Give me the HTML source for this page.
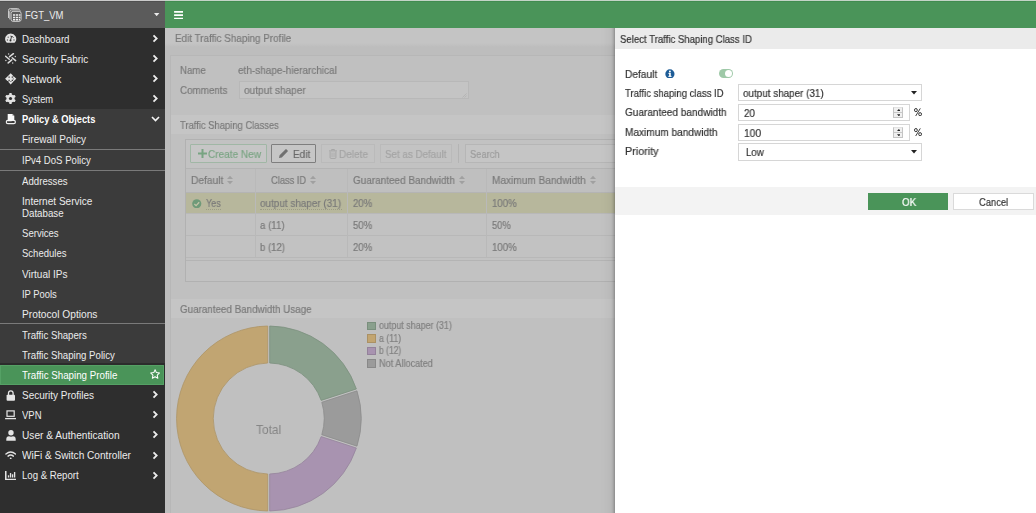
<!DOCTYPE html>
<html>
<head>
<meta charset="utf-8">
<title>FGT_VM</title>
<style>
*{box-sizing:border-box;margin:0;padding:0}
html,body{width:1036px;height:513px;overflow:hidden;background:#bfbfbf;font-family:"Liberation Sans",sans-serif;font-size:11px;color:#6e6e6e}
.abs{position:absolute}
.t{position:absolute;display:inline-block;white-space:nowrap;transform-origin:0 50%;transform:scaleX(.9);line-height:14px;height:14px}
/* top */
#topline{left:0;top:0;width:1036px;height:1px;background:linear-gradient(to right,#cbcbcb 0,#cbcbcb 165px,#c4d4c7 165px)}
#topline2{left:0;top:1px;width:1036px;height:1px;background:linear-gradient(to right,#505050 0,#505050 165px,#418c50 165px);z-index:1}
#hdrL{left:0;top:1px;width:165px;height:27px;background:#5b5b5b}
#hdrR{left:165px;top:1px;width:871px;height:27px;background:#4a9459}
/* sidebar */
#side{left:0;top:28px;width:165px;height:485px;background:#2e2e2e}
#sub{left:0;top:108.6px;width:165px;height:256.4px;background:#3b3b3b}
#sel{left:0;top:364.6px;width:164.2px;height:20.5px;background:#4a9459;box-shadow:inset 0 0 0 1px rgba(120,200,140,.25)}
.sep{position:absolute;left:0;width:165px;height:1px;background:#7a7a7a}
.s{color:#ececec}
.chev{position:absolute;left:151px;width:8px;height:10px}
/* main */
#main{left:165px;top:28px;width:450px;height:485px;background:#bdbdbd}
#mainhdr{left:165px;top:28px;width:450px;height:19px;background:linear-gradient(#c4c4c4 0,#c4c4c4 15px,#bdbdbd 19px)}
.m{color:#7a7a7a}
/* dialog */
#dlg{left:615px;top:28px;width:421px;height:485px;background:#fff}
#dlgclip{left:575px;top:28px;width:461px;height:485px;overflow:hidden}
#dlgclip>div{position:absolute;left:40px;top:-20px;width:440px;height:540px;background:#fff;box-shadow:0 0 4px rgba(0,0,0,.45),0 0 14px rgba(0,0,0,.13)}
#dlgtitle{left:615px;top:28px;width:421px;height:21px;background:#ebebeb}
#dlgfoot{left:615px;top:187px;width:421px;height:28px;background:#f3f3f3}
.d{color:#333}
.t:not(.s){will-change:transform}
.t:not(.s){-webkit-text-stroke:.2px currentColor}
.d{-webkit-text-stroke:.25px #333}
.fld{position:absolute;background:#fff;border:1px solid #d6d6d6}
</style>
</head>
<body>
<div class="abs" id="topline"></div>
<div class="abs" id="topline2"></div>
<div class="abs" id="hdrL"></div>
<div class="abs" id="hdrR"></div>

<!-- SIDEBAR -->
<div class="abs" id="side"></div>
<div class="abs" id="sub"></div>
<div class="abs" style="left:0;top:363.4px;width:165px;height:22.6px;background:#2c2c2c"></div>
<div class="abs" id="sel"></div>
<div class="sep" style="top:149px"></div>
<div class="sep" style="top:170px"></div>
<div class="sep" style="top:323px"></div>

<span class="t s" style="left:25.0px;top:8px;font-size:11px;transform:scaleX(0.862)">FGT_VM</span>

<span class="t s" style="left:21.9px;top:32px;transform:scaleX(0.883)">Dashboard</span>
<span class="t s" style="left:21.9px;top:52px;transform:scaleX(0.903)">Security Fabric</span>
<span class="t s" style="left:21.9px;top:72px;transform:scaleX(0.975)">Network</span>
<span class="t s" style="left:21.9px;top:92px;transform:scaleX(0.849)">System</span>
<span class="t s" style="left:21.9px;top:112px;font-weight:bold;color:#fff;transform:scaleX(0.845)">Policy &amp; Objects</span>
<span class="t s" style="left:21.9px;top:132px;transform:scaleX(0.911)">Firewall Policy</span>
<span class="t s" style="left:21.9px;top:153px;transform:scaleX(0.872)">IPv4 DoS Policy</span>
<span class="t s" style="left:21.9px;top:174px;transform:scaleX(0.877)">Addresses</span>
<span class="t s" style="left:21.9px;top:194px;transform:scaleX(0.914)">Internet Service</span>
<span class="t s" style="left:21.9px;top:206px;transform:scaleX(0.883)">Database</span>
<span class="t s" style="left:21.9px;top:226px;transform:scaleX(0.869)">Services</span>
<span class="t s" style="left:21.9px;top:246px;transform:scaleX(0.865)">Schedules</span>
<span class="t s" style="left:21.9px;top:267px;transform:scaleX(0.912)">Virtual IPs</span>
<span class="t s" style="left:21.9px;top:287px;transform:scaleX(0.854)">IP Pools</span>
<span class="t s" style="left:21.9px;top:307px;transform:scaleX(0.928)">Protocol Options</span>
<span class="t s" style="left:21.9px;top:328px;transform:scaleX(0.877)">Traffic Shapers</span>
<span class="t s" style="left:21.9px;top:348px;transform:scaleX(0.878)">Traffic Shaping Policy</span>
<span class="t s" style="left:21.9px;top:368px;color:#fff;transform:scaleX(0.886)">Traffic Shaping Profile</span>
<span class="t s" style="left:21.9px;top:388px;transform:scaleX(0.906)">Security Profiles</span>
<span class="t s" style="left:21.9px;top:408px;transform:scaleX(0.865)">VPN</span>
<span class="t s" style="left:21.9px;top:428px;transform:scaleX(0.923)">User &amp; Authentication</span>
<span class="t s" style="left:21.9px;top:448px;transform:scaleX(0.918)">WiFi &amp; Switch Controller</span>
<span class="t s" style="left:21.9px;top:468px;transform:scaleX(0.874)">Log &amp; Report</span>


<!-- header icons -->
<svg class="abs" style="left:8px;top:7.5px" width="14" height="14" viewBox="0 0 14 14" fill="none" stroke="#d6d6d6" stroke-width=".9">
<path d="M0.5 10V2.4Q0.5 0.6 2.3 0.6H9.6Q10.6 .6 11.4 1.6"/>
<path d="M1.8 11.4V3.7Q1.8 1.9 3.6 1.9H10.6Q11.8 1.9 12.6 3"/>
<rect x="3.1" y="3.4" width="10" height="10" rx="2"/>
<path d="M5 7.1h2.2M7.9 7.1h2.2M10.8 7.1h1.6M5 9.4h2.2M7.9 9.4h2.2M10.8 9.4h1.6M5 11.7h2.2M7.9 11.7h2.2M10.8 11.7h1.2" stroke="#efefef" stroke-width="1.5"/>
</svg>
<svg class="abs" style="left:154.2px;top:13px" width="5.4" height="3.3" viewBox="0 0 6 3.4"><path d="M0 0h6L3 3.4z" fill="#ececec"/></svg>
<svg class="abs" style="left:174px;top:10.7px" width="9.4" height="8.3" viewBox="0 0 10 9"><path d="M0 0h10v1.8H0zM0 3.6h10v1.8H0zM0 7.2h10V9H0z" fill="#fff"/></svg>

<!-- sidebar icons -->
<svg class="abs" style="left:5px;top:33px" width="12" height="11" viewBox="0 0 12 11"><path d="M5.7 0.4a5.5 5.5 0 0 0-4.7 8.4q.4.9 1.2.9h7q.8 0 1.2-.9A5.5 5.5 0 0 0 5.7.4z" fill="#e2e2e2"/><path d="M5.5 7.4L6.6 3.4M5.4 3.1L7.9 3.8" stroke="#2e2e2e" stroke-width=".9" fill="none"/><circle cx="5.5" cy="7.6" r="1" fill="#2e2e2e"/><circle cx="2.4" cy="7" r=".65" fill="#555"/><circle cx="3.2" cy="4.2" r=".65" fill="#555"/><circle cx="9" cy="7" r=".65" fill="#555"/><circle cx="8.4" cy="4.6" r=".5" fill="#666"/></svg>
<svg class="abs" style="left:5px;top:53px" width="12" height="11" viewBox="0 0 12 11" stroke="#dcdcdc" stroke-width="1.5" stroke-linecap="round" fill="#cfcfcf"><path d="M4.6 3.7L8.4 0.7M0.6 3.2L4.2 6.3M7.2 4.7L10.6 7.6M3.2 9.9L6.8 6.9"/><circle cx="3.6" cy="0.9" r=".75" stroke="none"/><circle cx="10.3" cy="3.4" r=".75" stroke="none"/><circle cx="0.9" cy="7.5" r=".75" stroke="none"/><circle cx="7.7" cy="10" r=".75" stroke="none"/></svg>
<svg class="abs" style="left:5px;top:72.5px" width="12" height="12" viewBox="0 0 12 12" fill="#e4e4e4"><path d="M5.7 0.2L8.9 3.6H2.5zM5.7 11.4L8.9 8H2.5zM0.1 5.8L3.5 2.6V9zM11.3 5.8L7.9 2.6V9zM4.7 3H6.7V8.6H4.7zM3 4.8H8.4V6.8H3z"/></svg>
<svg class="abs" style="left:5.2px;top:93px" width="11" height="11" viewBox="0 0 11 11"><g fill="#e2e2e2"><circle cx="5.5" cy="5.5" r="4"/><rect x="4.2" y="0.1" width="2.6" height="10.8" rx=".7"/><rect x="4.2" y="0.1" width="2.6" height="10.8" rx=".7" transform="rotate(60 5.5 5.5)"/><rect x="4.2" y="0.1" width="2.6" height="10.8" rx=".7" transform="rotate(120 5.5 5.5)"/></g><circle cx="5.5" cy="5.5" r="1.6" fill="#2e2e2e"/></svg>
<svg class="abs" style="left:5px;top:113px" width="12" height="12" viewBox="0 0 12 12"><rect x="1.3" y="7.3" width="9.1" height="3.3" rx="1.6" fill="#3b3b3b" stroke="#f0f0f0" stroke-width="1.2"/><path d="M2.7 0.9H7.5L9.3 2.8V7.4H7.2L6.6 8.3H2.7z" fill="#fafafa"/><path d="M7.5 0.9V2.8H9.3z" fill="#8a8a8a"/></svg>
<svg class="abs" style="left:6px;top:389.6px" width="9.6" height="11" viewBox="0 0 9 11"><path d="M2.2 5V3.1a2.3 2.3 0 0 1 4.6 0V5" fill="none" stroke="#e6e6e6" stroke-width="1.3"/><rect x="0.3" y="4.7" width="8.4" height="6" rx=".9" fill="#e6e6e6"/></svg>
<svg class="abs" style="left:5px;top:410.2px" width="11.2" height="10" viewBox="0 0 11 10" fill="none" stroke="#e6e6e6"><rect x="1.9" y=".9" width="7.2" height="5.4" stroke-width="1.2"/><path d="M0 8.6H11" stroke-width="1.3"/></svg>
<svg class="abs" style="left:5.8px;top:429.8px" width="10" height="11" viewBox="0 0 10 11" fill="#e4e4e4"><circle cx="5" cy="2.8" r="2.7"/><path d="M0.3 10.8V9.2Q.3 6.4 3 6.3Q5 7.2 7 6.3Q9.7 6.4 9.7 9.2V10.8z"/></svg>
<svg class="abs" style="left:5px;top:450.8px" width="11.4" height="8.6" viewBox="0 0 12 9" fill="none" stroke="#e4e4e4" stroke-width="1.5" stroke-linecap="round"><path d="M1 3.2Q6 -1.2 11 3.2"/><path d="M3.2 5.4Q6 3 8.8 5.4"/><circle cx="6" cy="7.7" r=".95" fill="#e4e4e4" stroke="none"/></svg>
<svg class="abs" style="left:5px;top:470.8px" width="11.2" height="9.2" viewBox="0 0 11 9" fill="#e4e4e4"><path d="M0 0H1.5V7.5H11V9H0z"/><rect x="2.8" y="4.2" width="1.3" height="2.2"/><rect x="4.8" y="2" width="1.3" height="4.4"/><rect x="6.8" y="3.2" width="1.3" height="3.2"/><rect x="8.8" y="1" width="1.3" height="5.4"/></svg>

<!-- chevrons -->
<svg class="abs chv" style="left:152px;top:34px" width="6" height="9" viewBox="0 0 6 9" fill="none" stroke="#ececec" stroke-width="1.8"><path d="M1.5 1.3L4.7 4.5L1.5 7.7"/></svg>
<svg class="abs chv" style="left:152px;top:54px" width="6" height="9" viewBox="0 0 6 9" fill="none" stroke="#ececec" stroke-width="1.8"><path d="M1.5 1.3L4.7 4.5L1.5 7.7"/></svg>
<svg class="abs chv" style="left:152px;top:74px" width="6" height="9" viewBox="0 0 6 9" fill="none" stroke="#ececec" stroke-width="1.8"><path d="M1.5 1.3L4.7 4.5L1.5 7.7"/></svg>
<svg class="abs chv" style="left:152px;top:94px" width="6" height="9" viewBox="0 0 6 9" fill="none" stroke="#ececec" stroke-width="1.8"><path d="M1.5 1.3L4.7 4.5L1.5 7.7"/></svg>
<svg class="abs chv" style="left:151px;top:116px" width="9" height="6" viewBox="0 0 9 6" fill="none" stroke="#f4f4f4" stroke-width="1.6"><path d="M1 1L4.5 4.6L8 1"/></svg>
<svg class="abs chv" style="left:152px;top:390px" width="6" height="9" viewBox="0 0 6 9" fill="none" stroke="#ececec" stroke-width="1.8"><path d="M1.5 1.3L4.7 4.5L1.5 7.7"/></svg>
<svg class="abs chv" style="left:152px;top:410px" width="6" height="9" viewBox="0 0 6 9" fill="none" stroke="#ececec" stroke-width="1.8"><path d="M1.5 1.3L4.7 4.5L1.5 7.7"/></svg>
<svg class="abs chv" style="left:152px;top:430px" width="6" height="9" viewBox="0 0 6 9" fill="none" stroke="#ececec" stroke-width="1.8"><path d="M1.5 1.3L4.7 4.5L1.5 7.7"/></svg>
<svg class="abs chv" style="left:152px;top:451px" width="6" height="9" viewBox="0 0 6 9" fill="none" stroke="#ececec" stroke-width="1.8"><path d="M1.5 1.3L4.7 4.5L1.5 7.7"/></svg>
<svg class="abs chv" style="left:152px;top:471px" width="6" height="9" viewBox="0 0 6 9" fill="none" stroke="#ececec" stroke-width="1.8"><path d="M1.5 1.3L4.7 4.5L1.5 7.7"/></svg>
<!-- star -->
<svg class="abs" style="left:150.3px;top:369.3px" width="10.2" height="10.2" viewBox="0 0 11 11" fill="none" stroke="#fff" stroke-width="1.1" stroke-linejoin="round"><path d="M5.5 0.8L6.9 3.9L10.3 4.3L7.8 6.6L8.5 10L5.5 8.3L2.5 10L3.2 6.6L0.7 4.3L4.1 3.9z"/></svg>

<!-- MAIN -->
<div class="abs" id="main"></div>
<div class="abs" id="mainhdr"></div>
<span class="t m" style="left:174.8px;top:31px;transform:scaleX(0.898)">Edit Traffic Shaping Profile</span>


<!-- section 1 -->
<div class="abs" style="left:170px;top:55px;width:445px;height:458px;background:#c0c0c0;border:1px solid #b7b7b7;border-right:0;border-bottom:0"></div>
<span class="t m" style="left:180.2px;top:63px;transform:scaleX(0.879)">Name</span>
<span class="t m" style="left:238.4px;top:63px;transform:scaleX(0.908)">eth-shape-hierarchical</span>
<span class="t m" style="left:180.2px;top:83px;transform:scaleX(0.891)">Comments</span>
<div class="abs" style="left:239px;top:81px;width:230px;height:18px;background:#c4c4c4;border:1px solid #b8b8b8"></div>
<span class="t m" style="left:244.3px;top:83px;transform:scaleX(0.918)">output shaper</span>
<svg class="abs" style="left:462px;top:93px" width="5" height="5" viewBox="0 0 6 6" stroke="#b2b2b2" stroke-width="1"><path d="M0.5 5.5L5.5 .5M3 5.5L5.5 3"/></svg>

<!-- section 2 -->
<div class="abs" style="left:171px;top:115px;width:444px;height:18.5px;background:#c5c5c5"></div>
<span class="t m" style="left:180.2px;top:118px;transform:scaleX(0.855)">Traffic Shaping Classes</span>
<div class="abs" style="left:185px;top:139px;width:430px;height:143px;background:#c2c2c2;border:1px solid #b1b1b1;border-right:0"></div>
<!-- toolbar -->
<div class="abs" style="left:190px;top:144px;width:77px;height:19px;background:#c6c6c6;border:1px solid #a0b7a5;border-radius:1px"></div>
<svg class="abs" style="left:198px;top:149px" width="9" height="9" viewBox="0 0 9 9"><path d="M3.5 0h2v3.5H9v2H5.5V9h-2V5.5H0v-2h3.5z" fill="#78a482"/></svg>
<span class="t" style="left:208.1px;top:147px;color:#7ca585;transform:scaleX(0.912)">Create New</span>
<div class="abs" style="left:271px;top:144px;width:45px;height:19px;background:#c6c6c6;border:1px solid #7e7e7e;border-radius:1px"></div>
<svg class="abs" style="left:279px;top:149px" width="9" height="9" viewBox="0 0 9 9"><path d="M0 9L.6 6.2L6.4.4Q7 -.2 7.6.4L8.6 1.4Q9.2 2 8.6 2.6L2.8 8.4z" fill="#707070"/></svg>
<span class="t" style="left:292.8px;top:147px;color:#6a6a6a;transform:scaleX(0.911)">Edit</span>
<div class="abs" style="left:321.4px;top:144px;width:53.2px;height:19px;background:#c3c3c3;border:1px solid #bababa"></div>
<svg class="abs" style="left:329px;top:148.6px" width="8" height="10" viewBox="0 0 8 10" fill="none" stroke="#a6a6a6"><path d="M0 1.9H8M2.6 1.6V.5H5.4V1.6" stroke-width="1"/><path d="M1.1 2.6V8.6Q1.1 9.4 1.9 9.4H6.1Q6.9 9.4 6.9 8.6V2.6" stroke-width="1"/><path d="M3 3.6V8M5 3.6V8" stroke-width=".8"/></svg>
<span class="t" style="left:338.9px;top:147px;color:#a4a4a4;transform:scaleX(0.912)">Delete</span>
<div class="abs" style="left:379.8px;top:144px;width:72.4px;height:19px;background:#c3c3c3;border:1px solid #bababa"></div>
<span class="t" style="left:384.5px;top:147px;color:#a4a4a4;transform:scaleX(0.890)">Set as Default</span>
<div class="abs" style="left:458px;top:144px;width:1px;height:19px;background:#b4b4b4"></div>
<div class="abs" style="left:465px;top:144px;width:150px;height:19px;background:#c5c5c5;border:1px solid #b6b6b6;border-right:0"></div>
<span class="t" style="left:470.2px;top:147px;color:#9c9c9c;transform:scaleX(0.849)">Search</span>
<!-- table -->
<div class="abs" style="left:186px;top:168px;width:429px;height:1px;background:#b4b4b4"></div>
<div class="abs" style="left:186px;top:169px;width:429px;height:23px;background:#bfbfbf"></div>
<div class="abs" style="left:186px;top:192px;width:429px;height:1px;background:#b4b4b4"></div>
<div class="abs" style="left:186px;top:193px;width:429px;height:20px;background:#b7b79c"></div>
<div class="abs" style="left:186px;top:213px;width:429px;height:1px;background:#b8b8b8"></div>
<div class="abs" style="left:186px;top:235px;width:429px;height:1px;background:#b8b8b8"></div>
<div class="abs" style="left:186px;top:257px;width:429px;height:1px;background:#b8b8b8"></div>
<div class="abs" style="left:186px;top:260px;width:429px;height:1px;background:#b4b4b4"></div>
<div class="abs" style="left:255px;top:169px;width:1px;height:88px;background:#b9b9b9"></div>
<div class="abs" style="left:347px;top:169px;width:1px;height:88px;background:#b9b9b9"></div>
<div class="abs" style="left:486px;top:169px;width:1px;height:88px;background:#b9b9b9"></div>
<span class="t m" style="left:191.0px;top:173px;transform:scaleX(0.929)">Default</span>
<span class="t m" style="left:270.6px;top:173px;transform:scaleX(0.845)">Class ID</span>
<span class="t m" style="left:352.9px;top:173px;transform:scaleX(0.905)">Guaranteed Bandwidth</span>
<span class="t m" style="left:492.2px;top:173px;transform:scaleX(0.918)">Maximum Bandwidth</span>
<svg class="abs sort" style="left:227px;top:175px" width="6" height="10" viewBox="0 0 6 10" fill="#a0a0a0"><path d="M0 4.1L3 .8L6 4.1zM0 5.9L3 9.2L6 5.9z"/></svg>
<svg class="abs sort" style="left:310px;top:175px" width="6" height="10" viewBox="0 0 6 10" fill="#a0a0a0"><path d="M0 4.1L3 .8L6 4.1zM0 5.9L3 9.2L6 5.9z"/></svg>
<svg class="abs sort" style="left:459px;top:175px" width="6" height="10" viewBox="0 0 6 10" fill="#a0a0a0"><path d="M0 4.1L3 .8L6 4.1zM0 5.9L3 9.2L6 5.9z"/></svg>
<svg class="abs sort" style="left:590px;top:175px" width="6" height="10" viewBox="0 0 6 10" fill="#a0a0a0"><path d="M0 4.1L3 .8L6 4.1zM0 5.9L3 9.2L6 5.9z"/></svg>
<svg class="abs" style="left:192px;top:198.6px" width="9.5" height="9.5" viewBox="0 0 10 10"><circle cx="5" cy="5" r="4.8" fill="#6f9a79"/><path d="M2.5 5.2L4.3 7L7.6 3.4" fill="none" stroke="#c4c4a8" stroke-width="1.4"/></svg>
<span class="t m" style="left:205.5px;top:196px;transform:scaleX(0.822)">Yes</span>
<div class="abs" style="left:206px;top:209px;width:15px;height:0;border-top:1px dotted #9c9c86"></div>
<div class="abs" style="left:260px;top:209px;width:82px;height:0;border-top:1px dotted #9c9c86"></div>
<span class="t m" style="left:260.0px;top:196px;transform:scaleX(0.902)">output shaper (31)</span>
<span class="t m" style="left:352.9px;top:196px;transform:scaleX(0.873)">20%</span>
<span class="t m" style="left:492.2px;top:196px;transform:scaleX(0.879)">100%</span>
<span class="t m" style="left:260.0px;top:218px;transform:scaleX(0.879)">a (11)</span>
<span class="t m" style="left:352.9px;top:218px;transform:scaleX(0.873)">50%</span>
<span class="t m" style="left:492.2px;top:218px;transform:scaleX(0.850)">50%</span>
<span class="t m" style="left:260.0px;top:240px;transform:scaleX(0.869)">b (12)</span>
<span class="t m" style="left:352.9px;top:240px;transform:scaleX(0.873)">20%</span>
<span class="t m" style="left:492.2px;top:240px;transform:scaleX(0.879)">100%</span>

<!-- section 3 -->
<div class="abs" style="left:171px;top:299px;width:444px;height:18.5px;background:#c5c5c5"></div>
<span class="t m" style="left:179.8px;top:302px;transform:scaleX(0.893)">Guaranteed Bandwidth Usage</span>
<svg class="abs" style="left:170px;top:320px" width="200" height="193" viewBox="170 320 200 193">
<g stroke-width=".8">
<path fill="#8aa08d" stroke="#7b8f7e" d="M269.70 326.01A92.5 92.5 0 0 1 356.36 388.97L321.17 400.40A55.5 55.5 0 0 0 269.70 363.01z"/><path fill="#9b9b9b" stroke="#8b8b8b" d="M356.98 390.87A92.5 92.5 0 0 1 356.98 446.13L321.78 434.70A55.5 55.5 0 0 0 321.78 402.30z"/><path fill="#a893b0" stroke="#96849c" d="M356.36 448.03A92.5 92.5 0 0 1 269.70 510.99L269.70 473.99A55.5 55.5 0 0 0 321.17 436.60z"/><path fill="#c1a572" stroke="#ad9466" d="M267.70 510.99A92.5 92.5 0 0 1 267.70 326.01L267.70 363.01A55.5 55.5 0 0 0 267.70 473.99z"/>
</g>
</svg>
<div class="abs" style="left:367px;top:321.7px;width:8.8px;height:8.6px;background:#8aa08d;border:1px solid #7a8f7d"></div>
<div class="abs" style="left:367px;top:334.2px;width:8.8px;height:8.6px;background:#c2a571;border:1px solid #ab9164"></div>
<div class="abs" style="left:367px;top:346.6px;width:8.8px;height:8.6px;background:#a893b0;border:1px solid #94829b"></div>
<div class="abs" style="left:367px;top:359.1px;width:8.8px;height:8.6px;background:#9b9b9b;border:1px solid #898989"></div>
<span class="t m" style="left:378.5px;top:319px;font-size:10px;color:#808080;transform:scaleX(0.891)">output shaper (31)</span>
<span class="t m" style="left:378.5px;top:332px;font-size:10px;color:#808080;transform:scaleX(0.872)">a (11)</span>
<span class="t m" style="left:378.5px;top:344px;font-size:10px;color:#808080;transform:scaleX(0.850)">b (12)</span>
<span class="t m" style="left:378.5px;top:357px;font-size:10px;color:#808080;transform:scaleX(0.914)">Not Allocated</span>
<span class="t m" style="left:255.9px;top:423px;font-size:13px;transform:scaleX(0.919);color:#868686;-webkit-text-stroke:0">Total</span>

<!-- DIALOG -->
<div class="abs" id="dlgclip"><div></div></div>
<div class="abs" id="dlg"></div>
<div class="abs" id="dlgtitle"></div>
<div class="abs" id="dlgfoot"></div>
<span class="t d" style="left:620.0px;top:32px;transform:scaleX(0.871)">Select Traffic Shaping Class ID</span>


<span class="t d" style="left:625.2px;top:67px;transform:scaleX(0.926)">Default</span>
<svg class="abs" style="left:665.4px;top:68.7px" width="9.8" height="9.8" viewBox="0 0 10 10"><circle cx="5" cy="5" r="4.7" fill="#1d5c97"/><rect x="4.2" y="4" width="1.7" height="3.7" fill="#fff"/><rect x="3.5" y="4" width="1.6" height="1" fill="#fff"/><rect x="3.4" y="7" width="3.3" height="1" fill="#fff"/><circle cx="5" cy="2.5" r="1" fill="#fff"/></svg>
<div class="abs" style="left:719px;top:69px;width:14px;height:9px;border-radius:5px;background:#9fc9a8"></div>
<div class="abs" style="left:725px;top:70px;width:7px;height:7px;border-radius:4px;background:#fff"></div>

<span class="t d" style="left:625.2px;top:86px;transform:scaleX(0.867)">Traffic shaping class ID</span>
<div class="fld" style="left:738px;top:84px;width:184px;height:17px"></div>
<span class="t d" style="left:743.1px;top:86px;transform:scaleX(0.898)">output shaper (31)</span>
<svg class="abs" style="left:910.8px;top:91.2px" width="6" height="3.4" viewBox="0 0 6 3.4"><path d="M0 0h6L3 3.4z" fill="#222"/></svg>

<span class="t d" style="left:625.2px;top:105px;transform:scaleX(0.912)">Guaranteed bandwidth</span>
<div class="fld" style="left:738px;top:104px;width:172px;height:17px"></div>
<span class="t d" style="left:743.5px;top:106px;transform:scaleX(0.900)">20</span>
<div class="abs" style="left:893.4px;top:107.3px;width:10px;height:10.8px;background:#f0f0f0;border:1px solid #c4c4c4;border-top-color:#e2e2e2"></div>
<div class="abs" style="left:894.4px;top:112.2px;width:8px;height:1px;background:#c8c8c8"></div>
<svg class="abs" style="left:896.5px;top:108.9px" width="3.8" height="7.3" viewBox="0 0 3.8 7.3" fill="#222"><path d="M0 2L1.9 0L3.8 2zM0 5.2L1.9 7.3L3.8 5.2z"/></svg>
<svg class="abs" style="left:914px;top:108.1px" width="8" height="8.4" viewBox="0 0 8 8.4" fill="none" stroke="#333" stroke-width="1"><ellipse cx="1.9" cy="2.1" rx="1.4" ry="1.6"/><ellipse cx="6.1" cy="6.2" rx="1.4" ry="1.6"/><path d="M6.3 .4L1.7 8" stroke-width=".95"/></svg>

<span class="t d" style="left:625.2px;top:125px;transform:scaleX(0.917)">Maximum bandwidth</span>
<div class="fld" style="left:738px;top:123.6px;width:172px;height:17.2px"></div>
<span class="t d" style="left:743.5px;top:126px;transform:scaleX(0.933)">100</span>
<div class="abs" style="left:893.4px;top:127px;width:10px;height:10.8px;background:#f0f0f0;border:1px solid #c4c4c4;border-top-color:#e2e2e2"></div>
<div class="abs" style="left:894.4px;top:132px;width:8px;height:1px;background:#c8c8c8"></div>
<svg class="abs" style="left:896.5px;top:128.6px" width="3.8" height="7.3" viewBox="0 0 3.8 7.3" fill="#222"><path d="M0 2L1.9 0L3.8 2zM0 5.2L1.9 7.3L3.8 5.2z"/></svg>
<svg class="abs" style="left:914px;top:127.9px" width="8" height="8.4" viewBox="0 0 8 8.4" fill="none" stroke="#333" stroke-width="1"><ellipse cx="1.9" cy="2.1" rx="1.4" ry="1.6"/><ellipse cx="6.1" cy="6.2" rx="1.4" ry="1.6"/><path d="M6.3 .4L1.7 8" stroke-width=".95"/></svg>

<span class="t d" style="left:625.2px;top:144px;transform:scaleX(0.979)">Priority</span>
<div class="fld" style="left:738px;top:143px;width:184px;height:17.5px"></div>
<span class="t d" style="left:746.1px;top:145px;transform:scaleX(0.880)">Low</span>
<svg class="abs" style="left:910.8px;top:150.2px" width="6" height="3.4" viewBox="0 0 6 3.4"><path d="M0 0h6L3 3.4z" fill="#222"/></svg>

<div class="abs" style="left:868px;top:193px;width:80px;height:17px;background:#4a9459"></div>
<span class="t" style="left:902.2px;top:195px;color:#fff;transform:scaleX(0.900)">OK</span>
<div class="abs" style="left:953.4px;top:193px;width:80.6px;height:17px;background:#fff;border:1px solid #dadada"></div>
<span class="t d" style="left:978.8px;top:195px;transform:scaleX(0.853)">Cancel</span>

</body>
</html>
